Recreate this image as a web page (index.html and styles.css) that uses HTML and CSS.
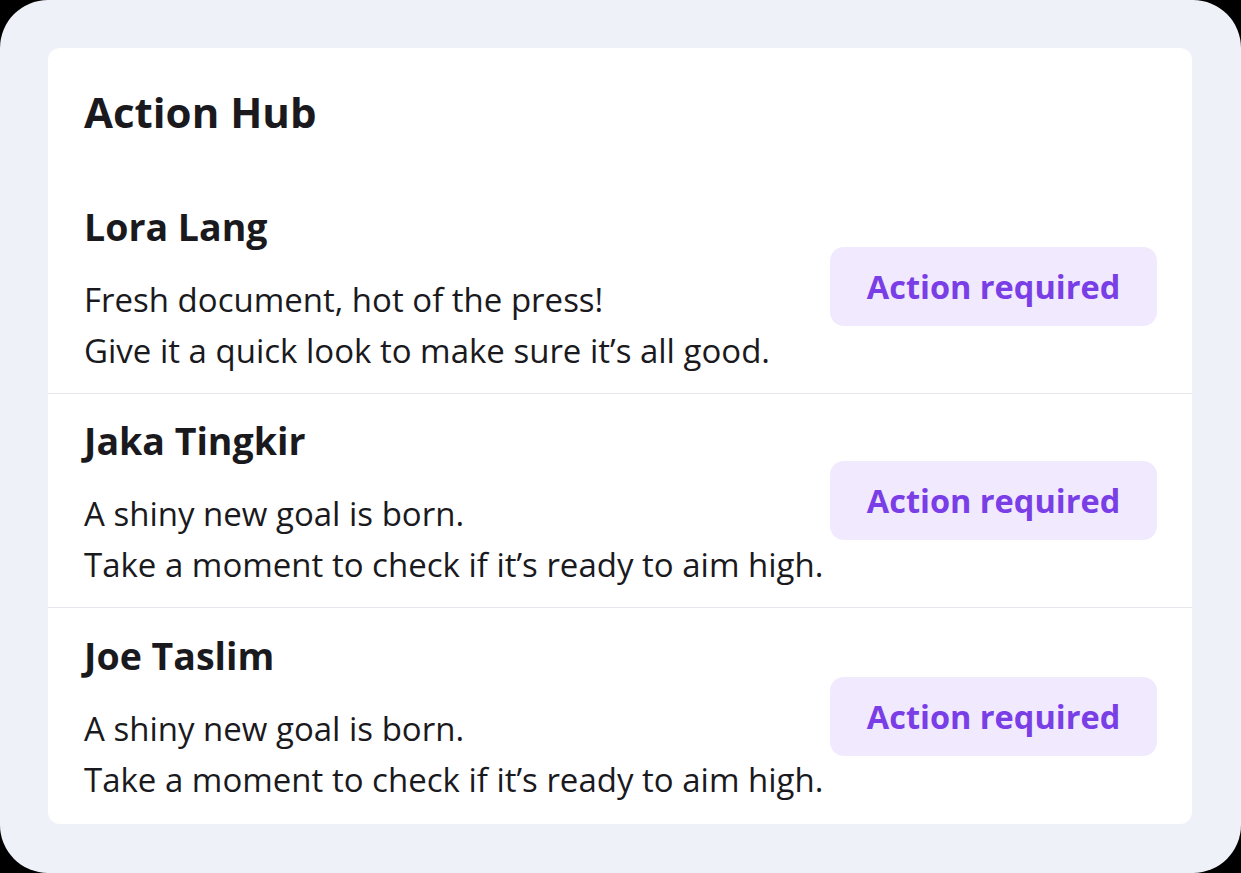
FILE: index.html
```html
<!DOCTYPE html>
<html lang="en">
<head>
<meta charset="utf-8">
<title>Action Hub</title>
<link rel="stylesheet" href="styles.css">
</head>
<body>
<div class="frame">
  <section class="card">
    <h1 class="title">Action Hub</h1>
    <div class="row">
      <div class="info">
        <h2 class="name">Lora Lang</h2>
        <p class="msg">Fresh document, hot of the press!<br>Give it a quick look to make sure it’s all good.</p>
      </div>
      <span class="badge">Action required</span>
    </div>
    <div class="row">
      <div class="info">
        <h2 class="name">Jaka Tingkir</h2>
        <p class="msg">A shiny new goal is born.<br>Take a moment to check if it’s ready to aim high.</p>
      </div>
      <span class="badge">Action required</span>
    </div>
    <div class="row">
      <div class="info">
        <h2 class="name">Joe Taslim</h2>
        <p class="msg">A shiny new goal is born.<br>Take a moment to check if it’s ready to aim high.</p>
      </div>
      <span class="badge">Action required</span>
    </div>
  </section>
</div>
</body>
</html>
```
FILE: styles.css
```css
* { box-sizing: border-box; }
html, body { margin: 0; padding: 0; }
body {
  background: #000;
  font-family: "Open Sans", "Noto Sans", sans-serif;
  color: #1a1a1e;
}
.frame {
  width: 1241px;
  height: 873px;
  background: #eef1f7;
  border-radius: 48px;
  padding: 48px 49px 49px 48px;
}
.card {
  background: #fff;
  border-radius: 12px;
  height: 776px;
  display: flex;
  flex-direction: column;
}
.title {
  margin: 0;
  padding: 38px 36px 0;
  height: 132px;
  font-size: 42px;
  line-height: 52px;
  font-weight: 700;
}
.row {
  display: flex;
  align-items: center;
  justify-content: space-between;
  padding: 0 35px 0 36px;
  height: 214px;
  border-bottom: 1px solid #e6e8ee;
}
.row:last-child { border-bottom: none; flex: 1; }
.info { margin-top: 7px; }
.name {
  margin: 0 0 25px;
  font-size: 37.5px;
  line-height: 44px;
  font-weight: 700;
}
.msg {
  margin: 0;
  font-size: 33px;
  line-height: 51px;
  font-weight: 400;
}
.badge {
  display: flex;
  align-items: center;
  justify-content: center;
  width: 327px;
  height: 79px;
  border-radius: 14px;
  background: #f1e9fe;
  color: #7a3ee6;
  font-size: 32.5px;
  font-weight: 700;
}
```
